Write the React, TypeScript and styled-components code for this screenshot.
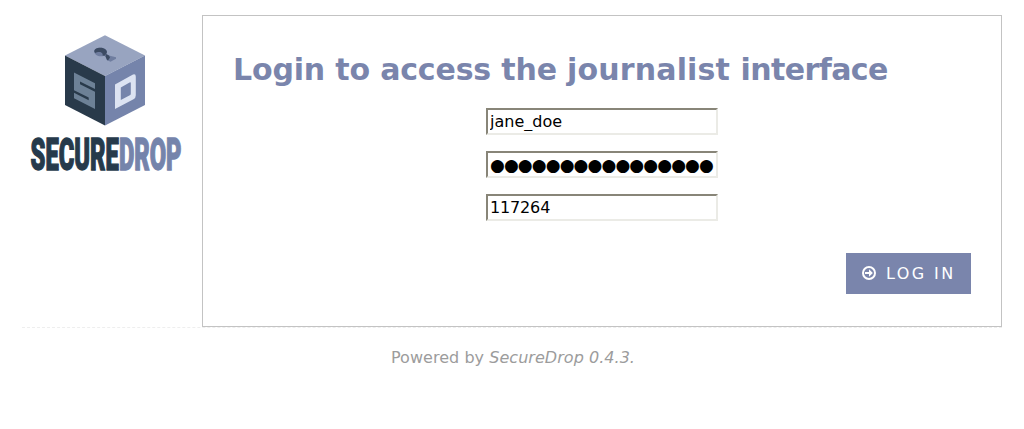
import React from "react";
import styled, { createGlobalStyle } from "styled-components";

const GlobalStyle = createGlobalStyle`
  body {
    margin: 0;
    background: #fff;
    color: #000;
    font: 16px "DejaVu Sans", Verdana, sans-serif;
  }
`;

const Page = styled.div`
  padding: 15px 22px 0;
`;

const Content = styled.div`
  display: flex;
  align-items: flex-start;
`;

const LogoLink = styled.a`
  flex: 0 0 180px;
  padding: 15px 0 0 3px;
  box-sizing: border-box;
`;

const LogoArt = styled.svg`
  display: block;
  overflow: visible;
`;

const WordMark = styled.text`
  font-family: Roboto, "Liberation Sans", sans-serif;
  font-weight: 900;
  font-size: 44px;
  stroke-width: 1.4px;
`;

const Panel = styled.main`
  flex: 0 0 800px;
  height: 312px;
  box-sizing: border-box;
  border: 1px solid #c3c3c3;
  padding: 36px 30px 0;
`;

const Title = styled.h1`
  margin: 0;
  font-size: 30px;
  line-height: 36px;
  letter-spacing: -0.17px;
  color: #7a85ac;
  white-space: nowrap;
`;

const TitleWord = styled.span<{ $tracking: string }>`
  letter-spacing: ${(p) => p.$tracking};
`;

const Form = styled.form`
  display: flex;
  flex-direction: column;
  align-items: center;
  gap: 16px;
  padding-top: 20px;
`;

const Field = styled.input<{ $size?: string; $tracking?: string }>`
  width: 232px;
  height: 27px;
  box-sizing: border-box;
  margin: 0;
  padding: 1px 2px;
  border: 2px solid;
  border-color: #888578 #ebebe6 #ebebe6 #888578;
  background: #fff;
  color: #000;
  font: ${(p) => p.$size ?? "16px"} "DejaVu Sans", sans-serif;
  letter-spacing: ${(p) => p.$tracking ?? "normal"};
  outline: none;
`;

const LoginButton = styled.button`
  align-self: flex-end;
  display: flex;
  align-items: center;
  width: 125px;
  height: 41px;
  margin: 16px 0 0;
  padding: 0 0 0 16px;
  gap: 10px;
  border: 0;
  background: #7a85ac;
  color: #fff;
  font: 16px "DejaVu Sans", sans-serif;
  letter-spacing: 2.4px;
  white-space: nowrap;
`;

const ArrowArt = styled.svg`
  position: relative;
  top: -1px;
`;

const Footer = styled.footer`
  border-top: 1px dashed #eee;
  padding-top: 20px;
  line-height: 20px;
  text-align: center;
  letter-spacing: 0.04px;
  text-indent: 2px;
  color: #9c9c9c;
`;

function Logo() {
  return (
    <LogoArt width="160" height="145" viewBox="25 30 160 145" role="img" aria-label="SecureDrop">
      <path d="M105 35.3 145 55.5 105 76 65 55.5Z" fill="#98a4c0" />
      <path d="M65 55.5 105 76V125.5L65 105Z" fill="#293a4a" />
      <path d="M145 55.5 105 76V125.5L145 105Z" fill="#7584ab" />
      <path d="M94.3 51.5C93.8 48 101 46.3 105 49C107.3 50.5 107.3 52.3 106.3 53.8L109 55.6L116 57.3V58.8L110.5 61.8L107 60L105.5 56.5L104 55.8C99 57.3 94.5 55.3 94.3 51.5Z" fill="#6f7d9f" />
      <path d="M94.3 51.5C93.8 48 101 46.3 105 49C107.3 50.5 107.3 52.3 106.3 53.8L104.5 55.8L102.5 55.6C103.5 53 100.5 51 97 52.3L95 53ZM106 54 109 55.6 110 57.5 108 60.5 107 60 105.5 56.5Z" fill="#3c4b63" />
      <path d="M74 72.5 95 83.2V89L80 81.4V84.2L95 91.8V109L74 98.3V92.8L88.7 100.2V97.6L74 90.2Z" fill="#6d8196" />
      <path fillRule="evenodd" d="M115 84.6 133 74.6Q135.8 73.6 135.8 76.8V95.2Q135.8 98 133.5 99.3L115 109ZM120.8 87.6V100L129.8 95.3Q130.8 94.7 130.8 93.4V83.2Q130.8 81.8 129.6 82.5Z" fill="#dce3f2" />
      <WordMark x="30.6" y="169.5" textLength="151" lengthAdjust="spacingAndGlyphs">
        <tspan fill="#263a4b" stroke="#263a4b">SECURE</tspan>
        <tspan fill="#7584ab" stroke="#7584ab">DROP</tspan>
      </WordMark>
    </LogoArt>
  );
}

function ArrowIcon() {
  return (
    <ArrowArt width="14" height="14" viewBox="0 0 14 14" aria-hidden="true">
      <circle cx="7" cy="7" r="6" fill="none" stroke="#fff" strokeWidth="2" />
      <path d="M3 5.9H7V3.2L10.9 7 7 10.8V8.1H3Z" fill="#fff" />
    </ArrowArt>
  );
}

export default function App() {
  return (
    <Page>
      <GlobalStyle />
      <Content>
        <LogoLink>
          <Logo />
        </LogoLink>
        <Panel>
          <Title>
            Login to access the <TitleWord $tracking="0.15px">journalist </TitleWord>
            <TitleWord $tracking="-0.6px">interface</TitleWord>
          </Title>
          <Form>
            <Field defaultValue="jane_doe" aria-label="Username" />
            <Field $size="17px" $tracking="-0.9px" defaultValue={"●".repeat(16)} aria-label="Passphrase" />
            <Field $tracking="-0.15px" defaultValue="117264" aria-label="Two-factor code" />
            <LoginButton type="button">
              <ArrowIcon />
              LOG IN
            </LoginButton>
          </Form>
        </Panel>
      </Content>
      <Footer>
        Powered by <em>SecureDrop 0.4.3.</em>
      </Footer>
    </Page>
  );
}
